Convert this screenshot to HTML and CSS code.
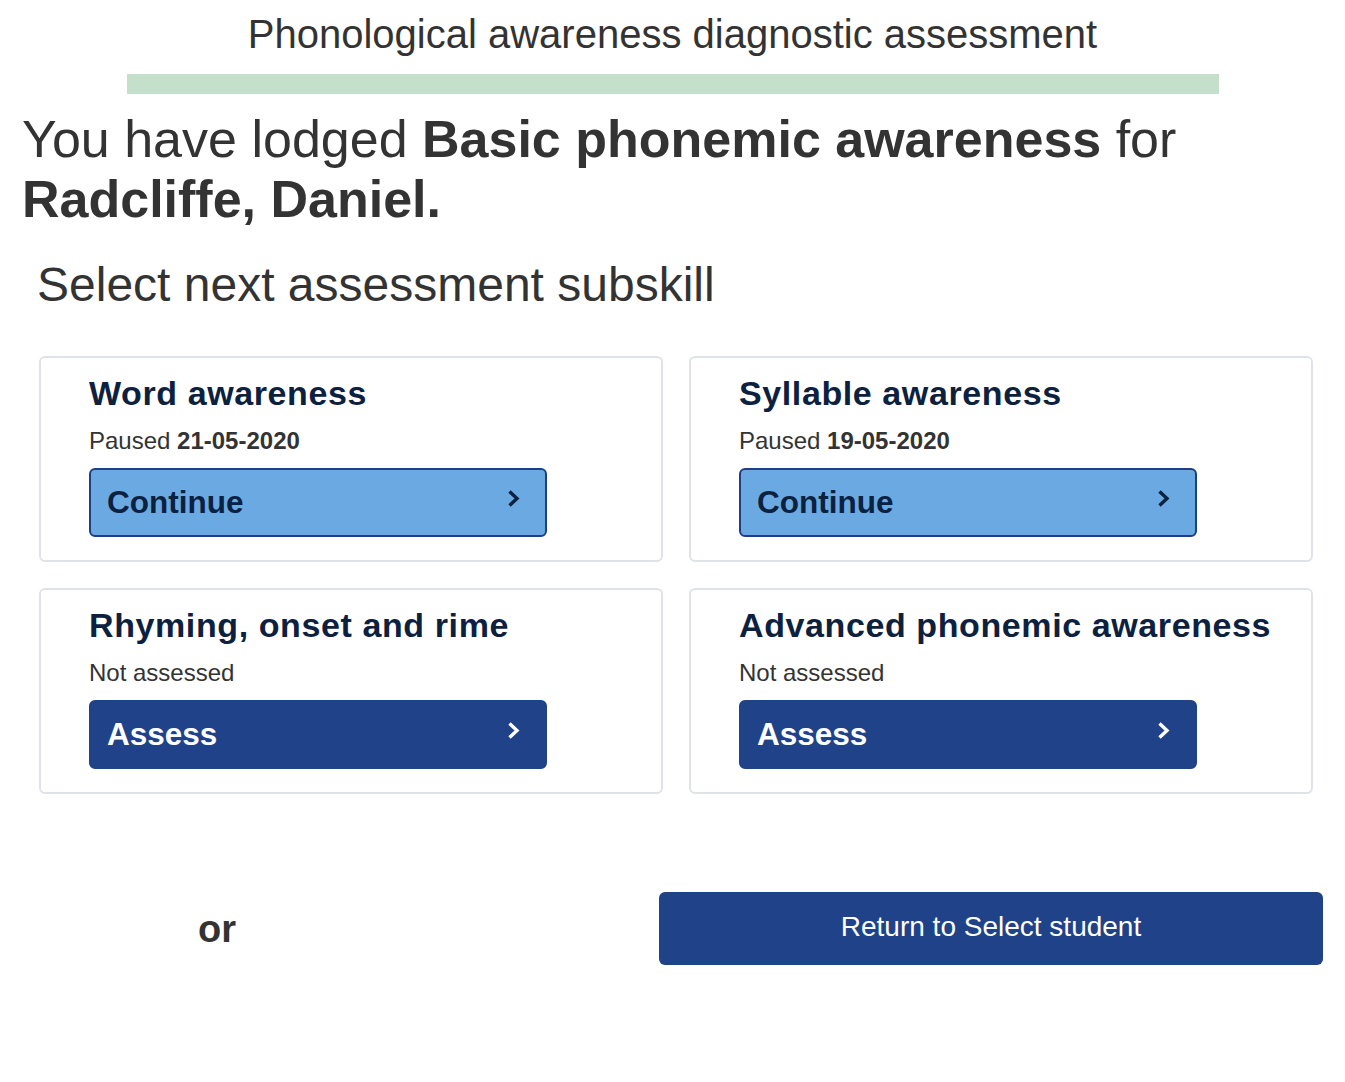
FILE: index.html
```html
<!DOCTYPE html>
<html lang="en">
<head>
<meta charset="utf-8">
<title>Phonological awareness diagnostic assessment</title>
<link rel="stylesheet" href="styles.css">
</head>
<body>
<header class="page-header">
  <h1 class="app-title">Phonological awareness diagnostic assessment</h1>
  <div class="progress-bar"></div>
</header>
<main class="main">
  <h2 class="lodged">You have lodged <strong>Basic phonemic awareness</strong> for <strong>Radcliffe, Daniel.</strong></h2>
  <h3 class="select-title">Select next assessment subskill</h3>
  <div class="cards">
    <section class="card">
      <h4 class="card-title">Word awareness</h4>
      <p class="card-status">Paused <strong>21-05-2020</strong></p>
      <button class="btn btn-continue"><span>Continue</span><svg class="chev" viewBox="0 0 13 19" width="13" height="19"><polyline points="2.5,2.5 10,9.5 2.5,16.5"/></svg></button>
    </section>
    <section class="card">
      <h4 class="card-title">Syllable awareness</h4>
      <p class="card-status">Paused <strong>19-05-2020</strong></p>
      <button class="btn btn-continue"><span>Continue</span><svg class="chev" viewBox="0 0 13 19" width="13" height="19"><polyline points="2.5,2.5 10,9.5 2.5,16.5"/></svg></button>
    </section>
    <section class="card">
      <h4 class="card-title">Rhyming, onset and rime</h4>
      <p class="card-status">Not assessed</p>
      <button class="btn btn-assess"><span>Assess</span><svg class="chev" viewBox="0 0 13 19" width="13" height="19"><polyline points="2.5,2.5 10,9.5 2.5,16.5"/></svg></button>
    </section>
    <section class="card">
      <h4 class="card-title">Advanced phonemic awareness</h4>
      <p class="card-status">Not assessed</p>
      <button class="btn btn-assess"><span>Assess</span><svg class="chev" viewBox="0 0 13 19" width="13" height="19"><polyline points="2.5,2.5 10,9.5 2.5,16.5"/></svg></button>
    </section>
  </div>
  <div class="footer-row">
    <span class="or">or</span>
    <button class="btn-return">Return to Select student</button>
  </div>
</main>
</body>
</html>
```

FILE: styles.css
```css
* { box-sizing: border-box; }
html, body {
  margin: 0;
  padding: 0;
  background: #ffffff;
}
body {
  font-family: "Liberation Sans", Arial, sans-serif;
  color: #333333;
}
.page-header {
  padding-top: 11px;
}
.app-title {
  margin: 0;
  font-size: 40px;
  line-height: 46px;
  font-weight: 400;
  text-align: center;
  color: #333333;
}
.progress-bar {
  margin: 17px auto 0;
  width: 1092px;
  height: 20px;
  background: #c4e0cb;
}
.main {
  padding: 0 22px 0 0;
}
.lodged {
  margin: 15px 0 0;
  padding-left: 22px;
  font-size: 52px;
  line-height: 60px;
  font-weight: 400;
  color: #333333;
}
.lodged strong { font-weight: 700; }
.select-title {
  margin: 28px 0 0;
  padding-left: 37px;
  font-size: 48px;
  line-height: 56px;
  font-weight: 400;
  color: #333333;
}
.cards {
  margin: 43px 10px 0 39px;
  display: grid;
  grid-template-columns: 624px 624px;
  gap: 26px;
}
.card {
  border: 2px solid #dfe3e8;
  border-radius: 6px;
  padding: 15px 40px 23px 48px;
}
.card-title {
  margin: 0;
  font-size: 34px;
  line-height: 40px;
  font-weight: 700;
  color: #0c2140;
  letter-spacing: 0.6px;
  white-space: nowrap;
}
.card-status {
  margin: 14px 0 0;
  font-size: 24px;
  line-height: 28px;
  color: #333333;
}
.card-status strong { font-weight: 700; }
.btn {
  margin-top: 13px;
  width: 458px;
  height: 69px;
  border-radius: 6px;
  border: 2px solid #1e3f87;
  display: flex;
  align-items: center;
  justify-content: space-between;
  padding: 0 25px 0 16px;
  font-family: "Liberation Sans", Arial, sans-serif;
  font-size: 31.5px;
  font-weight: 700;
  cursor: pointer;
}
.btn-continue {
  background: #6aa9e1;
  color: #0c2140;
}
.btn-assess {
  background: #1f4289;
  border-color: #1f4289;
  color: #ffffff;
}
.chev {
  margin-bottom: 9px;
  fill: none;
  stroke: currentColor;
  stroke-width: 3.4;
  stroke-linejoin: miter;
}
.footer-row {
  margin-top: 98px;
  display: flex;
  align-items: center;
}
.or {
  margin-left: 198px;
  font-size: 38px;
  font-weight: 700;
  color: #333333;
  line-height: 44px;
}
.btn-return {
  margin-left: auto;
  width: 664px;
  height: 73px;
  border: 0;
  border-radius: 6px;
  background: #1f4289;
  color: #ffffff;
  font-family: "Liberation Sans", Arial, sans-serif;
  font-size: 28px;
  font-weight: 400;
  cursor: pointer;
  padding: 0 0 4px;
}
```
